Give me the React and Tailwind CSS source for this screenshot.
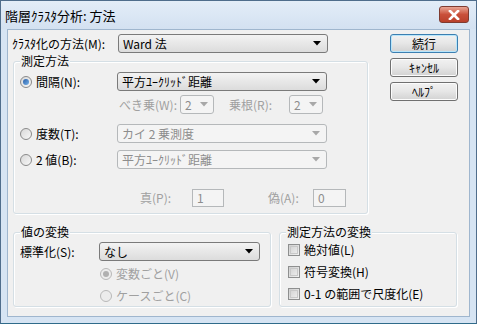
import React from "react";

const F = { fontFamily: '"Noto Sans CJK JP", "Noto Sans", sans-serif' };

function Arrow({ disabled }) {
  return (
    <svg width="8" height="5" viewBox="0 0 8 5" className="shrink-0">
      <path d="M0 0 H8 L4 4.5 Z" fill={disabled ? "#a8a8a8" : "#000"} />
    </svg>
  );
}

function Combo({ text, w, disabled }) {
  return (
    <div
      className={`flex items-center h-[19px] rounded-[3px] border pl-[4px] pr-[6px] ${w} ${
        disabled
          ? "border-[#b5b8ba] bg-[#f4f4f4] text-[#8d8d8d]"
          : "border-[#7a7a7a] bg-gradient-to-b from-[#f3f3f3] to-[#dcdcdc] text-black"
      }`}
    >
      <span className="flex-1 text-[12px] leading-none whitespace-nowrap">{text}</span>
      <Arrow disabled={disabled} />
    </div>
  );
}

function Radio({ checked, disabled }) {
  return (
    <div
      className={`w-[12px] h-[12px] rounded-full border flex items-center justify-center shrink-0 ${
        disabled ? "border-[#b8b8b8] bg-[#ececec]" : "border-[#8a8a8a] bg-gradient-to-br from-[#d8d8d8] to-[#f8f8f8]"
      }`}
    >
      {checked && (
        <div
          className={`w-[6px] h-[6px] rounded-full ${
            disabled ? "bg-[#b0b0b0]" : "bg-gradient-to-br from-[#2a5fa8] to-[#76b1e8]"
          }`}
        />
      )}
    </div>
  );
}

function Check() {
  return (
    <div className="w-[12px] h-[12px] border border-[#8e8f8f] bg-gradient-to-br from-[#cfcfcf] to-[#f2f2f2] shrink-0 p-[1px]">
      <div className="w-full h-full border border-[#c8c8c8]" />
    </div>
  );
}

function Btn({ children, def }) {
  return (
    <div
      className={`w-[68px] h-[19px] rounded-[3px] border flex items-center justify-center text-[12px] leading-none ${
        def ? "border-[#3c7fb1] shadow-[inset_0_0_0_1px_#b8e6fb]" : "border-[#707070] shadow-[inset_0_0_0_1px_#fcfcfc]"
      } bg-gradient-to-b from-[#f2f2f2] via-[#e6e6e6] to-[#d2d2d2]`}
    >
      {children}
    </div>
  );
}

function Group({ legend, className, children }) {
  return (
    <div className={`relative border border-[#d5dfe5] rounded-[3px] shadow-[inset_1px_1px_0_#ffffff,1px_1px_0_#ffffff] ${className}`}>
      <span className="absolute left-[6px] top-[-9px] bg-[#f0f0f0] px-[1px] text-[12px] leading-[16px]">{legend}</span>
      {children}
    </div>
  );
}

function Spin({ v }) {
  return (
    <div className="flex items-center w-[34px] h-[19px] rounded-[3px] border border-[#b5b8ba] bg-[#f4f4f4] pl-[4px] pr-[5px] text-[#8d8d8d]">
      <span className="flex-1 text-[12px] leading-none">{v}</span>
      <Arrow disabled />
    </div>
  );
}

function Field({ v, w }) {
  return (
    <div className={`h-[18px] border border-[#b5b8ba] bg-[#f4f4f4] flex items-center pl-[4px] text-[12px] leading-none text-[#8d8d8d] ${w}`}>
      {v}
    </div>
  );
}

export default function App() {
  return (
    <div style={F} className="w-[477px] h-[324px] flex flex-col bg-[#d6e4f3] border border-[#4f6d8c] border-b-[#2f6b8a] overflow-hidden text-black">
      <div className="h-[28px] flex items-center px-[4px] bg-gradient-to-b from-[#e3edf8] to-[#d3e1f1] shrink-0">
        <span className="flex-1 text-[13px] leading-none pt-[1px]">階層ｸﾗｽﾀ分析: 方法</span>
        <div className="w-[30px] h-[17px] mr-[3px] mt-[-1px] rounded-[3px] border border-[#7f3b30] bg-gradient-to-b from-[#e8a493] via-[#c9503a] to-[#b9402b] flex items-center justify-center">
          <svg width="12" height="10" viewBox="0 0 12 10">
            <path d="M2 1 L10 9 M10 1 L2 9" stroke="#fff" strokeWidth="2.6" strokeLinecap="square" />
          </svg>
        </div>
      </div>
      <div className="flex-1 mx-[6px] mb-[6px] bg-[#f0f0f0] border border-[#9fb6ce] flex flex-col relative">
        <div className="flex">
          <div className="w-[372px] pl-[4px] pt-[4px]">
            <div className="flex items-center h-[19px]">
              <span className="w-[106px] text-[12px] leading-none">ｸﾗｽﾀ化の方法(M):</span>
              <Combo text="Ward 法" w="w-[210px]" />
            </div>
            <Group legend="測定方法" className="mt-[8px] ml-[1px] w-[355px] h-[153px]">
              <div className="pl-[6px] pt-[10px]">
                <div className="flex items-center h-[19px]">
                  <div className="flex items-center gap-[4px] w-[97px]">
                    <Radio checked />
                    <span className="text-[12px] leading-none">間隔(N):</span>
                  </div>
                  <Combo text="平方ﾕｰｸﾘｯﾄﾞ距離" w="w-[210px]" />
                </div>
                <div className="flex items-center h-[19px] mt-[4px] text-[#a0a0a0] text-[12px] leading-none">
                  <span className="ml-[99px] w-[61px]">べき乗(W):</span>
                  <Spin v="2" />
                  <span className="ml-[15px] w-[60px]">乗根(R):</span>
                  <Spin v="2" />
                </div>
                <div className="flex items-center h-[19px] mt-[10px]">
                  <div className="flex items-center gap-[4px] w-[97px]">
                    <Radio />
                    <span className="text-[12px] leading-none">度数(T):</span>
                  </div>
                  <Combo text="カイ 2 乗測度" w="w-[210px]" disabled />
                </div>
                <div className="flex items-center h-[19px] mt-[7px]">
                  <div className="flex items-center gap-[4px] w-[97px]">
                    <Radio />
                    <span className="text-[12px] leading-none">2 値(B):</span>
                  </div>
                  <Combo text="平方ﾕｰｸﾘｯﾄﾞ距離" w="w-[210px]" disabled />
                </div>
                <div className="flex items-center h-[18px] mt-[20px] text-[#a0a0a0] text-[12px] leading-none">
                  <span className="ml-[120px] w-[52px]">真(P):</span>
                  <Field v="1" w="w-[32px]" />
                  <span className="ml-[44px] w-[45px]">偽(A):</span>
                  <Field v="0" w="w-[33px]" />
                </div>
              </div>
            </Group>
          </div>
          <div className="flex flex-col gap-[5px] pt-[4px] pl-[10px]">
            <Btn def>続行</Btn>
            <Btn>ｷｬﾝｾﾙ</Btn>
            <Btn>ﾍﾙﾌﾟ</Btn>
          </div>
        </div>
        <div className="flex gap-[8px] pl-[5px] mt-[18px]">
          <Group legend="値の変換" className="w-[258px] h-[75px]">
            <div className="pl-[6px] pt-[9px]">
              <div className="flex items-center h-[19px]">
                <span className="w-[79px] text-[12px] leading-none">標準化(S):</span>
                <Combo text="なし" w="w-[161px]" />
              </div>
              <div className="flex items-center gap-[4px] ml-[80px] mt-[5px] h-[16px] text-[#a0a0a0] text-[12px] leading-none">
                <Radio checked disabled />
                <span>変数ごと(V)</span>
              </div>
              <div className="flex items-center gap-[4px] ml-[80px] mt-[6px] h-[16px] text-[#a0a0a0] text-[12px] leading-none">
                <Radio disabled />
                <span>ケースごと(C)</span>
              </div>
            </div>
          </Group>
          <Group legend="測定方法の変換" className="w-[178px] h-[75px]">
            <div className="pl-[8px] pt-[9px] flex flex-col gap-[7px]">
              {["絶対値(L)", "符号変換(H)", "0-1 の範囲で尺度化(E)"].map((t) => (
                <div key={t} className="flex items-center gap-[4px] h-[15px]">
                  <Check />
                  <span className="text-[12px] leading-none">{t}</span>
                </div>
              ))}
            </div>
          </Group>
        </div>
      </div>
    </div>
  );
}
